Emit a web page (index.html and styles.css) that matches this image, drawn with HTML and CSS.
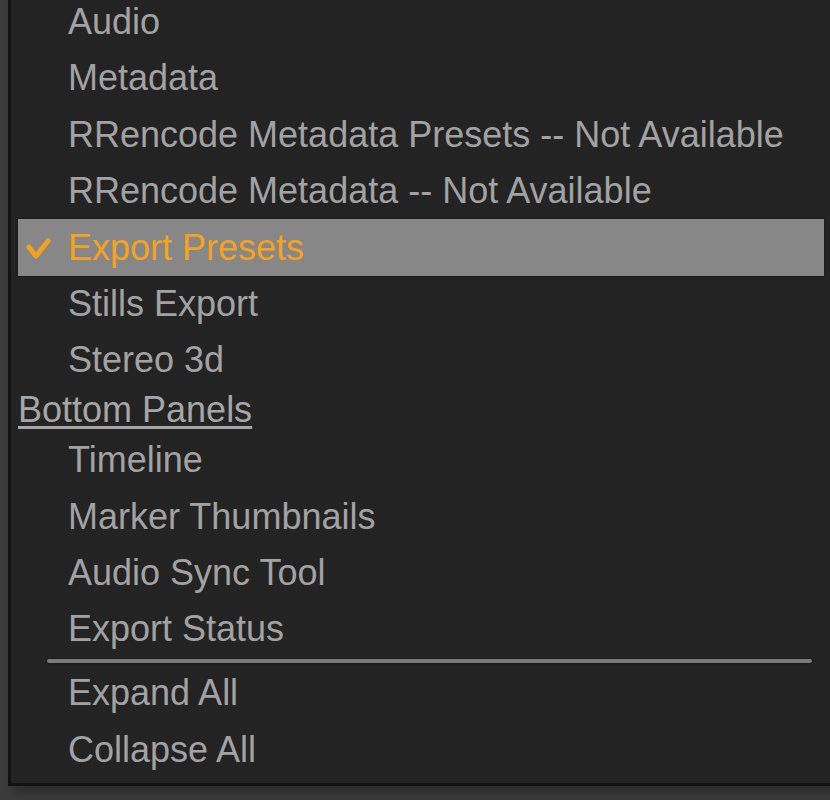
FILE: index.html
```html
<!DOCTYPE html>
<html>
<head>
<meta charset="utf-8">
<link rel="stylesheet" href="styles.css">
</head>
<body>
<div class="menu">
  <div class="item">Audio</div>
  <div class="item">Metadata</div>
  <div class="item">RRencode Metadata Presets -- Not Available</div>
  <div class="item">RRencode Metadata -- Not Available</div>
  <div class="item selected">
    <svg class="check" width="26" height="24" viewBox="0 0 26 24"><polyline points="3,10 10,19 22,4" fill="none" stroke="#f5a020" stroke-width="5" stroke-linecap="round" stroke-linejoin="round"/></svg>
    Export Presets
  </div>
  <div class="item">Stills Export</div>
  <div class="item">Stereo 3d</div>
  <div class="header">Bottom Panels</div>
  <div class="item">Timeline</div>
  <div class="item">Marker Thumbnails</div>
  <div class="item">Audio Sync Tool</div>
  <div class="item">Export Status</div>
  <div class="separator"></div>
  <div class="item">Expand All</div>
  <div class="item">Collapse All</div>
</div>
</body>
</html>
```

FILE: styles.css
```css
html, body {
  margin: 0;
  padding: 0;
  background: #3c3c3c;
  overflow: hidden;
  width: 830px;
  height: 800px;
}

.menu {
  margin-top: -6px;
  margin-left: 8px;
  margin-right: -10px;
  background: #232323;
  border-left: 3px solid #121212;
  border-bottom: 3px solid #121212;
  padding-bottom: 5px;
  box-shadow: 6px 8px 10px rgba(0, 0, 0, 0.25);
  font-family: "Liberation Sans", Arial, sans-serif;
  font-size: 36px;
  color: #a2a2a2;
}

.item {
  position: relative;
  height: 56.3px;
  line-height: 56.3px;
  padding-left: 50px;
  margin-left: 7px;
  margin-right: 16px;
  white-space: nowrap;
}

.item.selected {
  background: #878787;
  color: #f5a21e;
  height: 57px;
  line-height: 57px;
  margin-top: -0.35px;
  margin-bottom: -0.35px;
  box-shadow: 0 0 2px rgba(0,0,0,0.6);
}

.check {
  position: absolute;
  left: 8px;
  top: 18px;
}

.header {
  height: 44.2px;
  line-height: 44px;
  padding-left: 0;
  margin-left: 7px;
  color: #a6a6a6;
  text-decoration: underline;
  text-decoration-thickness: 3px;
  text-underline-offset: 4px;
}

.separator {
  height: 4px;
  margin: 2px 28px 2px 36px;
  background: #7a7a7a;
  border-radius: 2px;
  box-shadow: 0 0 2px rgba(0,0,0,0.7);
}
```
